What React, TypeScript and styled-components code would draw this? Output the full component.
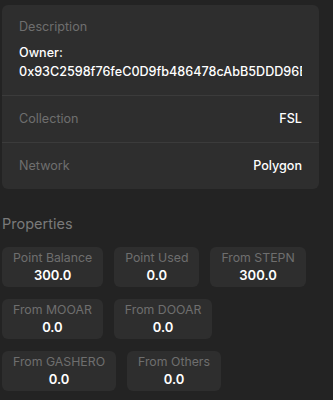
import React from "react";
import styled, { createGlobalStyle } from "styled-components";

const Global = createGlobalStyle`
  html, body { margin: 0; padding: 0; background: #232323; }
  body { font-family: Inter, "Noto Sans", sans-serif; -webkit-font-smoothing: antialiased; }
`;

const Page = styled.div`
  width: 333px;
  height: 400px;
  box-sizing: border-box;
  padding: 5px 14px 0 2px;
  background: #232323;
  overflow: hidden;
`;

const Card = styled.div`
  background: #2e2e2e;
  border-radius: 6px;
  overflow: hidden;
`;

const Row = styled.div<{ $stack?: boolean }>`
  display: flex;
  flex-direction: ${(p) => (p.$stack ? "column" : "row")};
  justify-content: space-between;
  align-items: ${(p) => (p.$stack ? "stretch" : "center")};
  padding: ${(p) => (p.$stack ? "14px 17px 14px 17px" : "0 17px")};
  height: ${(p) => (p.$stack ? "auto" : "47px")};
  box-sizing: border-box;
  & + & { border-top: 1px solid #3b3b3b; }
`;

const Label = styled.div`
  color: #6e6e6e;
  font-size: 12.6px;
  line-height: 16px;
`;

const Value = styled.div`
  color: #ffffff;
  font-size: 12.6px;
  font-weight: 500;
  line-height: 16px;
`;

const Desc = styled.div`
  margin-top: 8px;
  color: #ffffff;
  font-size: 12.6px;
  font-weight: 500;
  line-height: 19px;
  white-space: nowrap;
  overflow: hidden;
`;

const Heading = styled.div`
  margin-top: 26px;
  color: #7a7a7a;
  font-size: 14.5px;
  line-height: 18px;
`;

const Chips = styled.div`
  margin-top: 14px;
  display: flex;
  flex-direction: column;
  gap: 12px;
`;

const ChipRow = styled.div`
  display: flex;
  gap: 11px;
`;

const Chip = styled.div`
  background: #2e2e2e;
  border-radius: 6px;
  padding: 3px 11px 0;
  height: 40px;
  box-sizing: border-box;
  display: flex;
  flex-direction: column;
  align-items: center;
`;

const ChipLabel = styled.div`
  color: #6e6e6e;
  font-size: 12.3px;
  line-height: 16px;
  white-space: nowrap;
`;

const ChipValue = styled.div`
  color: #ffffff;
  font-size: 13px;
  font-weight: 600;
  line-height: 18px;
`;

const rows: [string, string][][] = [
  [["Point Balance", "300.0"], ["Point Used", "0.0"], ["From STEPN", "300.0"]],
  [["From MOOAR", "0.0"], ["From DOOAR", "0.0"]],
  [["From GASHERO", "0.0"], ["From Others", "0.0"]],
];

export default function App() {
  return (
    <>
      <Global />
      <Page>
        <Card>
          <Row $stack>
            <Label>Description</Label>
            <Desc>
              Owner:
              <br />
              0x93C2598f76feC0D9fb486478cAbB5DDD96B4E2A1
            </Desc>
          </Row>
          <Row>
            <Label>Collection</Label>
            <Value>FSL</Value>
          </Row>
          <Row>
            <Label>Network</Label>
            <Value>Polygon</Value>
          </Row>
        </Card>
        <Heading>Properties</Heading>
        <Chips>
          {rows.map((r, i) => (
            <ChipRow key={i}>
              {r.map(([l, v]) => (
                <Chip key={l}>
                  <ChipLabel>{l}</ChipLabel>
                  <ChipValue>{v}</ChipValue>
                </Chip>
              ))}
            </ChipRow>
          ))}
        </Chips>
      </Page>
    </>
  );
}
